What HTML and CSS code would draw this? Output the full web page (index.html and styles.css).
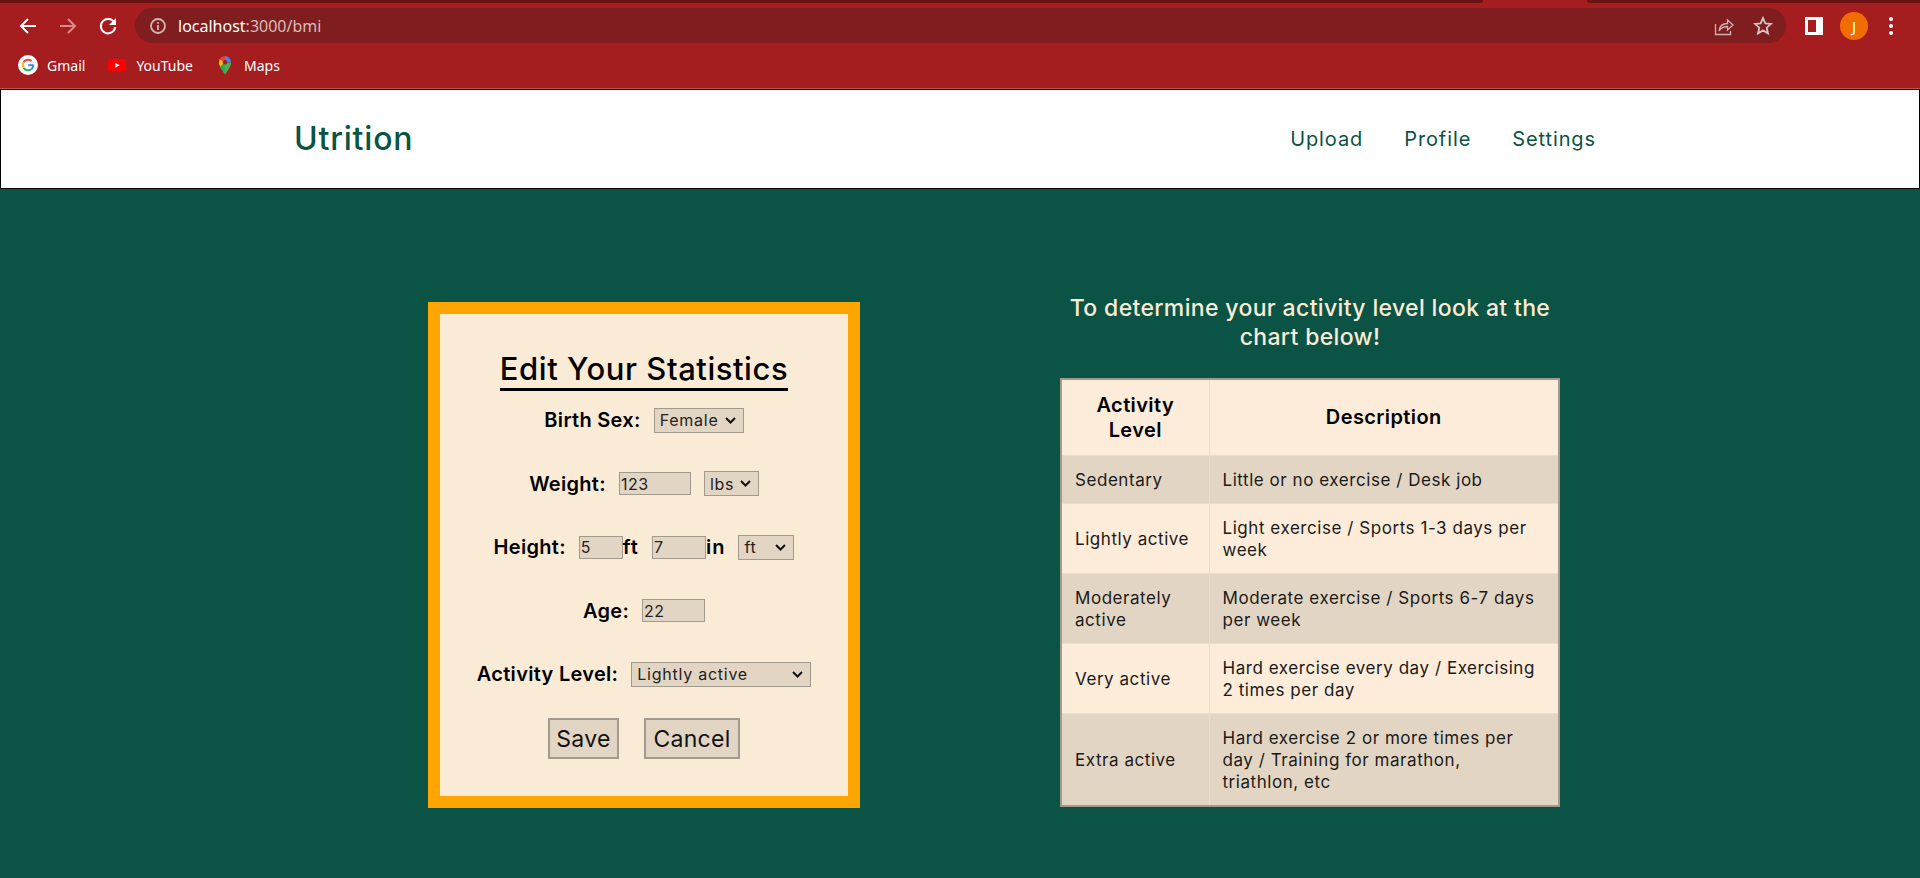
FILE: index.html
```html
<!DOCTYPE html>
<html lang="en">
<head>
    <meta charset="UTF-8">
    <meta name="viewport" content="width=device-width, initial-scale=1.0">
    <title>Utrition</title>
    <link rel="stylesheet" href="styles.css">
</head>
<body>

    <!-- browser chrome -->
    <div class="tab-strip">
        <div class="tab-dark tab-left"></div>
        <div class="tab-gap"></div>
        <div class="tab-dark tab-right"></div>
    </div>
    <div class="toolbar">
        <svg class="tool-icon" viewBox="0 0 20 20"><path d="M18 10H3M10 3l-7 7 7 7" fill="none" stroke="#fff" stroke-width="2"/></svg>
        <svg class="tool-icon dim" viewBox="0 0 20 20"><path d="M2 10h15M10 3l7 7-7 7" fill="none" stroke="#d98a8a" stroke-width="2"/></svg>
        <svg class="tool-icon" viewBox="0 0 20 20"><path d="M16.5 7A7.2 7.2 0 1 0 17.2 11" fill="none" stroke="#fff" stroke-width="2"/><path d="M18 2v7h-7z" fill="#fff"/></svg>
        <div class="omnibox">
            <svg class="info-icon" viewBox="0 0 18 18"><circle cx="9" cy="9" r="7" fill="none" stroke="#d0b4b4" stroke-width="1.8"/><path d="M9 8v5M9 5v1.8" stroke="#d0b4b4" stroke-width="1.8"/></svg>
            <span class="url">localhost<span class="url-rest">:3000/bmi</span></span>
            <svg class="share-icon" viewBox="0 0 20 20"><path d="M1.5 8v10.500h15V15" fill="none" stroke="#c9b5b5" stroke-width="1.300"/><path d="M5 15c.5-5 4-7.500 8.500-7.500V4l5.500 5-5.500 5v-3.500C10 10.500 7 12 5 15z" fill="none" stroke="#c9b5b5" stroke-width="1.300"/></svg>
            <svg class="star-icon" viewBox="0 0 20 20"><path d="M10 2l2.300 5.400 5.700.5-4.300 3.800 1.300 5.700-5-3-5 3 1.300-5.700L2 7.900l5.700-.5z" fill="none" stroke="#d6c6c6" stroke-width="1.800"/></svg>
        </div>
        <div class="panel-icon"></div>
        <div class="avatar">J</div>
        <div class="menu-dots"><i></i><i></i><i></i></div>
    </div>
    <div class="bookmarks">
        <div class="bookmark">
            <svg class="mark-icon" viewBox="0 0 20 20">
                <circle cx="10" cy="10" r="10" fill="#fff"/>
                <path d="M15 10.200h-4.800" stroke="#4285f4" stroke-width="2"/>
                <path d="M15.200 9.500a5.300 5.300 0 0 1-1.900 4.700" fill="none" stroke="#4285f4" stroke-width="2"/>
                <path d="M13.300 14.200a5.400 5.400 0 0 1-7.800-1.500" fill="none" stroke="#34a853" stroke-width="2"/>
                <path d="M5.500 12.700a5.400 5.400 0 0 1 0-5.400" fill="none" stroke="#fbbc05" stroke-width="2"/>
                <path d="M5.500 7.300a5.400 5.400 0 0 1 8.100-1.200" fill="none" stroke="#ea4335" stroke-width="2"/>
            </svg>
            <span>Gmail</span>
        </div>
        <div class="bookmark">
            <svg class="mark-icon" viewBox="0 0 20 20"><rect x="1" y="4" width="18" height="12.500" rx="3" fill="#f00"/><path d="M8.300 7.800l4.500 2.500-4.500 2.500z" fill="#fff"/></svg>
            <span>YouTube</span>
        </div>
        <div class="bookmark">
            <svg class="mark-icon" viewBox="0 0 20 20">
                <path d="M10 20C8.500 16 4 13 4 7.500h6z" fill="#34a853"/>
                <path d="M10 20c1.500-4 6-7 6-12.500h-6z" fill="#4caf50"/>
                <path d="M4.700 4A6.500 6.500 0 0 0 4 7.500c0 1.500.5 2.800 1.200 4L10 7z" fill="#fbbc05"/>
                <path d="M4.700 4A6.500 6.500 0 0 1 10 1v6z" fill="#ea4335"/>
                <path d="M10 1a6.300 6.300 0 0 1 6 6.500h-6z" fill="#4285f4"/>
                <circle cx="10" cy="7.300" r="2.300" fill="#a51d1f"/>
            </svg>
            <span>Maps</span>
        </div>
    </div>

    <header class="site-nav">
        <div class="brand">Utrition</div>
        <nav class="nav-links">
            <a>Upload</a>
            <a>Profile</a>
            <a>Settings</a>
        </nav>
    </header>

    <main class="content">
        <section class="stats-card">
            <h2 class="stats-title">Edit Your Statistics</h2>

            <div class="field-row first">
                <label>Birth Sex:</label>
                <select class="field-select sex-select"><option>Female</option></select>
            </div>
            <div class="field-row">
                <label>Weight:</label>
                <input class="field-input weight-input" value="123">
                <select class="field-select unit-select"><option>lbs</option></select>
            </div>
            <div class="field-row">
                <label>Height:</label>
                <span class="height-part">
                    <input class="field-input feet-input" value="5"><b>ft</b>
                </span>
                <span class="height-part">
                    <input class="field-input inch-input" value="7"><b>in</b>
                </span>
                <select class="field-select height-select"><option>ft</option></select>
            </div>
            <div class="field-row">
                <label>Age:</label>
                <input class="field-input age-input" value="22">
            </div>
            <div class="field-row">
                <label>Activity Level:</label>
                <select class="field-select activity-select"><option>Lightly active</option></select>
            </div>
            <div class="button-row">
                <button class="form-btn save-btn">Save</button>
                <button class="form-btn cancel-btn">Cancel</button>
            </div>
        </section>

        <section class="chart">
            <p class="chart-intro">To determine your activity level look at the chart below!</p>
            <table class="activity-table">
                <thead>
                    <tr><th class="col-level">Activity Level</th><th>Description</th></tr>
                </thead>
                <tbody>
                    <tr><td>Sedentary</td><td>Little or no exercise / Desk job</td></tr>
                    <tr><td>Lightly active</td><td>Light exercise / Sports 1-3 days per week</td></tr>
                    <tr><td>Moderately active</td><td>Moderate exercise / Sports 6-7 days per week</td></tr>
                    <tr><td>Very active</td><td>Hard exercise every day / Exercising 2 times per day</td></tr>
                    <tr><td>Extra active</td><td>Hard exercise 2 or more times per day / Training for marathon, triathlon, etc</td></tr>
                </tbody>
            </table>
        </section>
    </main>

</body>
</html>
```

FILE: styles.css
```css
* {
    box-sizing: border-box;
}

html, body {
    height: 100%;
}

body {
    margin: 0;
    display: flex;
    flex-direction: column;
    overflow: hidden;
    font-family: Inter, "Noto Sans", sans-serif;
    background-color: #0b5345;
    color: #000;
}

/* browser chrome */
.tab-strip {
    display: flex;
    height: 3px;
    background-color: #a51d1f;
}

.tab-dark {
    background-color: #6b1213;
}

.tab-left {
    width: 1483px;
    border-bottom-right-radius: 6px;
}

.tab-gap {
    width: 104px;
}

.tab-right {
    flex: 1;
    border-bottom-left-radius: 6px;
}

.toolbar {
    display: flex;
    align-items: center;
    height: 45px;
    padding: 5px 0 5px 18px;
    background-color: #a51d1f;
}

.tool-icon {
    width: 20px;
    height: 20px;
    margin-right: 20px;
    flex: none;
}

.omnibox {
    display: flex;
    align-items: center;
    width: 1651px;
    height: 35px;
    margin-left: -3px;
    padding-left: 14px;
    border-radius: 18px;
    background-color: #801d1f;
}

.info-icon {
    width: 18px;
    height: 18px;
}

.url {
    margin-left: 11px;
    font-family: "Noto Sans", sans-serif;
    font-size: 16px;
    color: #fff;
}

.url-rest {
    color: #d9bcbc;
}

.share-icon {
    width: 20px;
    height: 20px;
    margin-left: auto;
}

.star-icon {
    width: 20px;
    height: 20px;
    margin-left: 19px;
    margin-right: 13px;
}

.panel-icon {
    width: 18px;
    height: 18px;
    margin-left: 19px;
    border: 3px solid #fff;
    border-right-width: 7px;
    flex: none;
}

.avatar {
    display: flex;
    align-items: center;
    justify-content: center;
    width: 28px;
    height: 28px;
    margin-left: 17px;
    border-radius: 50%;
    background-color: #f26d00;
    color: #fff;
    font-family: "Noto Sans", sans-serif;
    font-size: 15px;
    flex: none;
}

.menu-dots {
    display: flex;
    flex-direction: column;
    gap: 3px;
    margin-left: 21px;
}

.menu-dots i {
    display: block;
    width: 4px;
    height: 4px;
    border-radius: 50%;
    background-color: #fff;
}

.bookmarks {
    display: flex;
    align-items: center;
    gap: 22px;
    height: 41px;
    padding-left: 18px;
    padding-bottom: 6px;
    background-color: #a51d1f;
    border-bottom: 1px solid #c2504f;
    color: #fff;
    font-family: "Noto Sans", sans-serif;
    font-size: 14px;
}

.bookmark {
    display: flex;
    align-items: center;
    gap: 9px;
}

.mark-icon {
    width: 20px;
    height: 20px;
}

/* site nav */
.site-nav {
    display: flex;
    align-items: center;
    justify-content: space-between;
    height: 100px;
    padding: 0 323px 0 293px;
    border: 1px solid #000;
    background-color: #fff;
    color: #0b5345;
}

.brand {
    font-size: 32px;
    font-weight: 500;
    letter-spacing: 0.8px;
    margin-top: -2px;
}

.nav-links {
    display: flex;
    gap: 41px;
    font-size: 20px;
    letter-spacing: 0.9px;
}

/* main */
.content {
    display: flex;
    flex: 1;
    align-items: flex-start;
    padding: 113px 0 0 428px;
}

.stats-card {
    display: flex;
    flex-direction: column;
    align-items: center;
    width: 432px;
    height: 506px;
    padding-top: 36px;
    border: 12px solid #ffa500;
    background-color: #faebd7;
}

.stats-title {
    margin: 0;
    padding-bottom: 1px;
    border-bottom: 3px solid #000;
    font-size: 31px;
    font-weight: 500;
    letter-spacing: 0.55px;
    line-height: 37px;
}

.field-row {
    display: flex;
    align-items: center;
    justify-content: center;
    gap: 13px;
    height: 26px;
    margin-top: 37.500px;
}

.field-row.first {
    margin-top: 16px;
}

.field-row label {
    font-size: 20px;
    font-weight: 600;
    letter-spacing: 0.3px;
}

.height-part b {
    font-size: 20px;
    font-weight: 600;
    letter-spacing: 1px;
}

.field-select, .field-input {
    border: 1px solid #a29a8c;
    border-radius: 0;
    background-color: #e3d5c3;
    color: #222;
    font-family: Inter, sans-serif;
    font-size: 16px;
    letter-spacing: 0.5px;
}

.field-select {
    height: 25px;
    padding: 0 0 0 5px;
    letter-spacing: 0.75px;
    appearance: none;
    background-image: url("data:image/svg+xml,%3Csvg xmlns='http://www.w3.org/2000/svg' viewBox='0 0 11 7'%3E%3Cpath d='M1 1l4.500 4.500L10 1' fill='none' stroke='%23111' stroke-width='2'/%3E%3C/svg%3E");
    background-repeat: no-repeat;
    background-position: right 7px center;
    background-size: 11px 7px;
}

.field-input {
    height: 23px;
    padding: 0 1px;
}

.sex-select { width: 90px; }
.weight-input { width: 72px; }
.unit-select { width: 55px; }
.feet-input { width: 44px; }
.inch-input { width: 54px; }
.height-select { width: 56px; }
.age-input { width: 63px; }
.activity-select { width: 180px; }

.height-part {
    display: flex;
    align-items: center;
}

.button-row {
    display: flex;
    justify-content: center;
    gap: 25px;
    margin-top: 31px;
}

.form-btn {
    height: 41px;
    padding: 0;
    border: 2px solid #a29a8c;
    background-color: #e3d5c3;
    color: #111;
    font-family: Inter, sans-serif;
    font-size: 23px;
    letter-spacing: 0.3px;
}

.save-btn { width: 71px; }
.cancel-btn { width: 96px; }

/* chart */
.chart {
    width: 500px;
    margin-left: 200px;
    margin-top: -8px;
}

.chart-intro {
    margin: 0 0 26px;
    color: #faebd7;
    font-size: 23px;
    font-weight: 500;
    letter-spacing: 0.35px;
    line-height: 29px;
    text-align: center;
}

.activity-table {
    width: 500px;
    border: 2px solid #a29a8c;
    border-collapse: collapse;
    font-size: 17px;
    letter-spacing: 0.55px;
    line-height: 22px;
}

.activity-table th, .activity-table td {
    padding: 12.500px 13px;
    border: 1px solid #e0e0e3;
}

.activity-table td:last-child {
    padding-right: 20px;
}

.activity-table th {
    padding: 12.500px;
    font-size: 20px;
    font-weight: 600;
    letter-spacing: 0.4px;
    line-height: 25px;
    text-align: center;
    background-color: #fcecd9;
}

.col-level {
    width: 148px;
}

.activity-table td {
    color: #1a1a1a;
}

.activity-table tbody tr:nth-child(odd) {
    background-color: #e3d5c3;
}

.activity-table tbody tr:nth-child(even) {
    background-color: #fcecd9;
}
```
